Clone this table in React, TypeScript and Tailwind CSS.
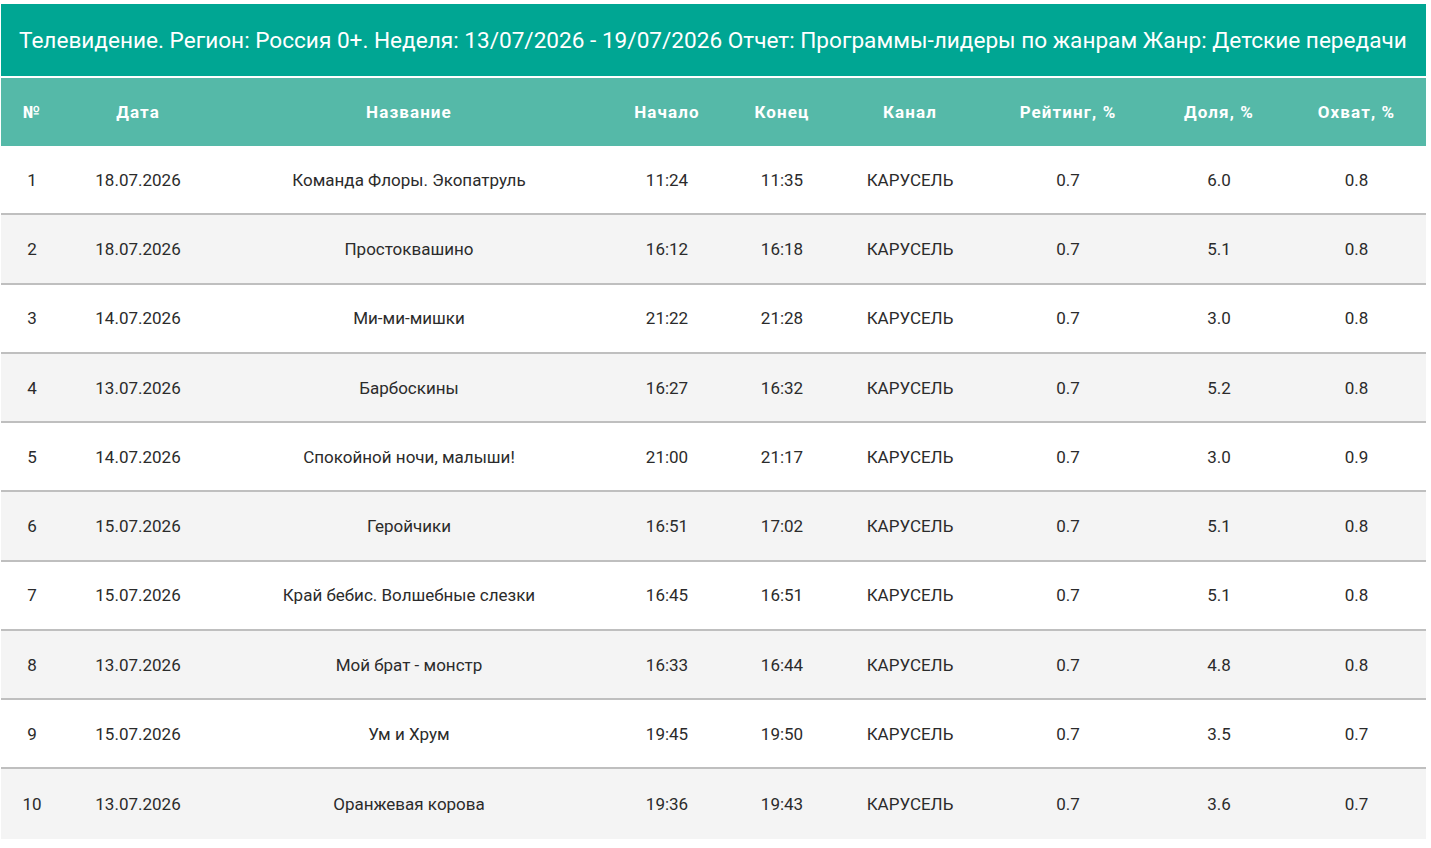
import React from "react";

const rows = [
  ["1", "18.07.2026", "Команда Флоры. Экопатруль", "11:24", "11:35", "КАРУСЕЛЬ", "0.7", "6.0", "0.8"],
  ["2", "18.07.2026", "Простоквашино", "16:12", "16:18", "КАРУСЕЛЬ", "0.7", "5.1", "0.8"],
  ["3", "14.07.2026", "Ми-ми-мишки", "21:22", "21:28", "КАРУСЕЛЬ", "0.7", "3.0", "0.8"],
  ["4", "13.07.2026", "Барбоскины", "16:27", "16:32", "КАРУСЕЛЬ", "0.7", "5.2", "0.8"],
  ["5", "14.07.2026", "Спокойной ночи, малыши!", "21:00", "21:17", "КАРУСЕЛЬ", "0.7", "3.0", "0.9"],
  ["6", "15.07.2026", "Геройчики", "16:51", "17:02", "КАРУСЕЛЬ", "0.7", "5.1", "0.8"],
  ["7", "15.07.2026", "Край бебис. Волшебные слезки", "16:45", "16:51", "КАРУСЕЛЬ", "0.7", "5.1", "0.8"],
  ["8", "13.07.2026", "Мой брат - монстр", "16:33", "16:44", "КАРУСЕЛЬ", "0.7", "4.8", "0.8"],
  ["9", "15.07.2026", "Ум и Хрум", "19:45", "19:50", "КАРУСЕЛЬ", "0.7", "3.5", "0.7"],
  ["10", "13.07.2026", "Оранжевая корова", "19:36", "19:43", "КАРУСЕЛЬ", "0.7", "3.6", "0.7"],
];

const headers = ["№", "Дата", "Название", "Начало", "Конец", "Канал", "Рейтинг, %", "Доля, %", "Охват, %"];

const cols = "grid grid-cols-[62px_150px_392px_124px_106px_150px_166px_136px_139px]";

export default function App() {
  return (
    <div className="bg-white pt-1 pl-px w-[1426px] font-['Roboto',sans-serif]">
      <div className="bg-[#00a693] h-[72px] flex items-center pl-[18px] pt-[2px] text-white text-[22.6px] whitespace-nowrap">
        Телевидение. Регион: Россия 0+. Неделя: 13/07/2026 - 19/07/2026 Отчет: Программы-лидеры по жанрам Жанр: Детские передачи
      </div>
      <div className={`${cols} mt-[2px] bg-[#55b9a8] h-[68px] items-center pt-[2px] text-white text-[17px] font-bold tracking-[1.1px]`}>
        {headers.map((h) => (
          <div key={h} className="text-center">{h}</div>
        ))}
      </div>
      {rows.map((r, i) => (
        <div
          key={r[0]}
          className={`${cols} items-center h-[69.25px] pt-[2px] text-[17px] text-[#2b2b2b] ${i % 2 === 1 ? "bg-[#f4f4f4]" : "bg-white"} ${i < rows.length - 1 ? "border-b-2 border-[#bfbfbf]" : ""}`}
        >
          {r.map((c, j) => (
            <div key={j} className="text-center">{c}</div>
          ))}
        </div>
      ))}
    </div>
  );
}
